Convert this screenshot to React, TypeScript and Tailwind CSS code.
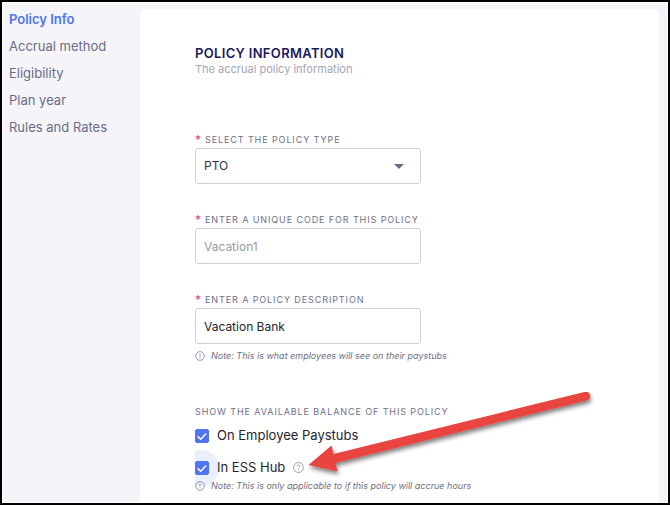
import type { ReactNode } from "react";

const steps = [
  "Policy Info",
  "Accrual method",
  "Eligibility",
  "Plan year",
  "Rules and Rates",
];

const Sidebar = () => {
  return (
    <nav className="w-[137px] shrink-0 pl-1.5 pt-1.5">
      <ul className="flex flex-col gap-[7px]">
        {steps.map((step, i) => (
          <li key={step} className="h-5">
            <a
              href="#"
              className={
                i === 0
                  ? "block text-[13px] leading-5 font-semibold text-[#4f75f0]"
                  : "block text-[13px] leading-5 text-[#6c6c84]"
              }
            >
              {step}
            </a>
          </li>
        ))}
      </ul>
    </nav>
  );
};

const FieldLabel = ({ id, children }: { id: string; children: ReactNode }) => {
  return (
    <label
      htmlFor={id}
      className="flex gap-1 h-4 text-[9px] leading-4 tracking-widest text-[#6f6f8a] uppercase whitespace-nowrap"
    >
      <span className="text-xs leading-4 tracking-normal text-[#e0455f]">
        *
      </span>
      {children}
    </label>
  );
};

const InfoIcon = () => {
  return (
    <svg
      viewBox="0 0 12 12"
      className="size-2.5 shrink-0"
      fill="none"
      stroke="#85859c"
      aria-hidden="true"
    >
      <circle cx="6" cy="6" r="5.2" strokeWidth="1" />
      <path d="M6 3v3.6M6 7.8v1.1" strokeWidth="1.1" />
    </svg>
  );
};

const HelpIcon = () => {
  return (
    <svg
      viewBox="0 0 12 12"
      className="size-[11px] shrink-0"
      fill="none"
      stroke="#8c8ca3"
      aria-hidden="true"
    >
      <circle cx="6" cy="6" r="5.4" strokeWidth="0.9" />
      <path
        d="M4.5 4.8c0-.9.7-1.5 1.5-1.5s1.5.6 1.5 1.4C7.5 5.8 6 5.8 6 7M6 8v1"
        strokeWidth="0.9"
      />
    </svg>
  );
};

const Note = ({ children }: { children: ReactNode }) => {
  return (
    <p className="relative flex items-center gap-1.5 h-4 text-[9px] leading-4 italic text-[#6f6f86] whitespace-nowrap">
      <InfoIcon />
      {children}
    </p>
  );
};

const CheckRow = ({
  id,
  focused,
  children,
}: {
  id: string;
  focused?: boolean;
  children: ReactNode;
}) => {
  return (
    <div className="relative flex items-center gap-2 h-5">
      {focused && (
        <span className="absolute left-0 -top-2 h-9 w-6 overflow-hidden">
          <span className="absolute right-0 top-0 size-9 rounded-full bg-[#eaeffd]" />
        </span>
      )}
      <span className="relative size-3.5 shrink-0">
        <input
          id={id}
          type="checkbox"
          defaultChecked
          className="peer block size-3.5 appearance-none rounded-xs border border-[#4f75f0] checked:bg-[#4f75f0]"
        />
        <svg
          viewBox="0 0 14 14"
          className="pointer-events-none absolute inset-0 hidden size-3.5 peer-checked:block"
          fill="none"
          stroke="#fff"
          strokeWidth="1.5"
          aria-hidden="true"
        >
          <path d="M2.8 7.4l2.9 2.8 5.5-5.8" />
        </svg>
      </span>
      <label htmlFor={id} className="relative text-[13px] text-[#26262e]">
        {children}
      </label>
      {focused && (
        <button type="button" aria-label="Help" className="flex pb-0.5">
          <HelpIcon />
        </button>
      )}
    </div>
  );
};

const Arrow = () => {
  return (
    <svg
      viewBox="0 0 290 90"
      className="pointer-events-none absolute left-[168px] bottom-5 h-[90px] w-[290px]"
      aria-hidden="true"
    >
      <defs>
        <filter id="arrow-shadow" x="-10%" y="-10%" width="120%" height="130%">
          <feDropShadow
            dx="1"
            dy="3"
            stdDeviation="2"
            floodColor="#000"
            floodOpacity="0.5"
          />
        </filter>
      </defs>
      <path
        d="M0.5 73 23.5 53.5 25.5 62 277.500 -0.300A4.500 4.500 0 0 1 279.500 8.300L27.500 71 29.500 79.500Z"
        fill="#e8453f"
        filter="url(#arrow-shadow)"
      />
    </svg>
  );
};

const App = () => {
  return (
    <div className="flex min-h-screen flex-col border-2 border-black bg-white p-px font-['Inter',sans-serif]">
      <div className="flex flex-1 bg-[#f4f4f9] pr-2">
        <Sidebar />
        <main className="relative mt-1.5 flex-1 rounded-t-md bg-white px-[55px] pt-9 pb-1">
          <header>
            <h1 className="text-[13px] leading-4 font-semibold tracking-wide text-[#1c1a5c]">
              POLICY INFORMATION
            </h1>
            <p className="text-[11px] leading-4 text-[#a5a5b6]">
              The accrual policy information
            </p>
          </header>

          <form className="mt-[55px]">
            <div className="flex flex-col gap-7">
              <div className="w-[226px]">
                <FieldLabel id="type">Select the policy type</FieldLabel>
                <div className="relative">
                  <select
                    id="type"
                    className="block h-9 w-full appearance-none rounded-[3px] border border-[#d0d0da] bg-white px-2 text-xs text-[#33333b]"
                  >
                    <option>PTO</option>
                  </select>
                  <svg
                    viewBox="0 0 10 5"
                    className="pointer-events-none absolute right-[17px] top-4 h-[5px] w-2.5"
                    fill="#6a6a8c"
                    aria-hidden="true"
                  >
                    <path d="M0 0h10L5 5z" />
                  </svg>
                </div>
              </div>

              <div className="w-[226px]">
                <FieldLabel id="code">
                  Enter a unique code for this policy
                </FieldLabel>
                <input
                  id="code"
                  type="text"
                  placeholder="Vacation1"
                  className="block h-9 w-full rounded-[3px] border border-[#d0d0da] bg-white px-2 text-xs placeholder:text-[#9a9a9e]"
                />
              </div>

              <div className="w-[226px]">
                <FieldLabel id="description">
                  Enter a policy description
                </FieldLabel>
                <input
                  id="description"
                  type="text"
                  defaultValue="Vacation Bank"
                  className="block h-9 w-full rounded-[3px] border border-[#d0d0da] bg-white px-2 text-xs text-[#26262e]"
                />
                <div className="mt-1">
                  <Note>Note: This is what employees will see on their paystubs</Note>
                </div>
              </div>
            </div>

            <fieldset className="mt-10">
              <legend className="text-[9px] leading-4 tracking-widest text-[#6f6f8a]">
                SHOW THE AVAILABLE BALANCE OF THIS POLICY
              </legend>
              <div className="mt-1.5 flex flex-col gap-3">
                <CheckRow id="paystubs">On Employee Paystubs</CheckRow>
                <CheckRow id="hub" focused>
                  In ESS Hub
                </CheckRow>
              </div>
              <Note>
                Note: This is only applicable to if this policy will accrue hours
              </Note>
            </fieldset>
          </form>
          <Arrow />
        </main>
      </div>
    </div>
  );
};

export default App;
